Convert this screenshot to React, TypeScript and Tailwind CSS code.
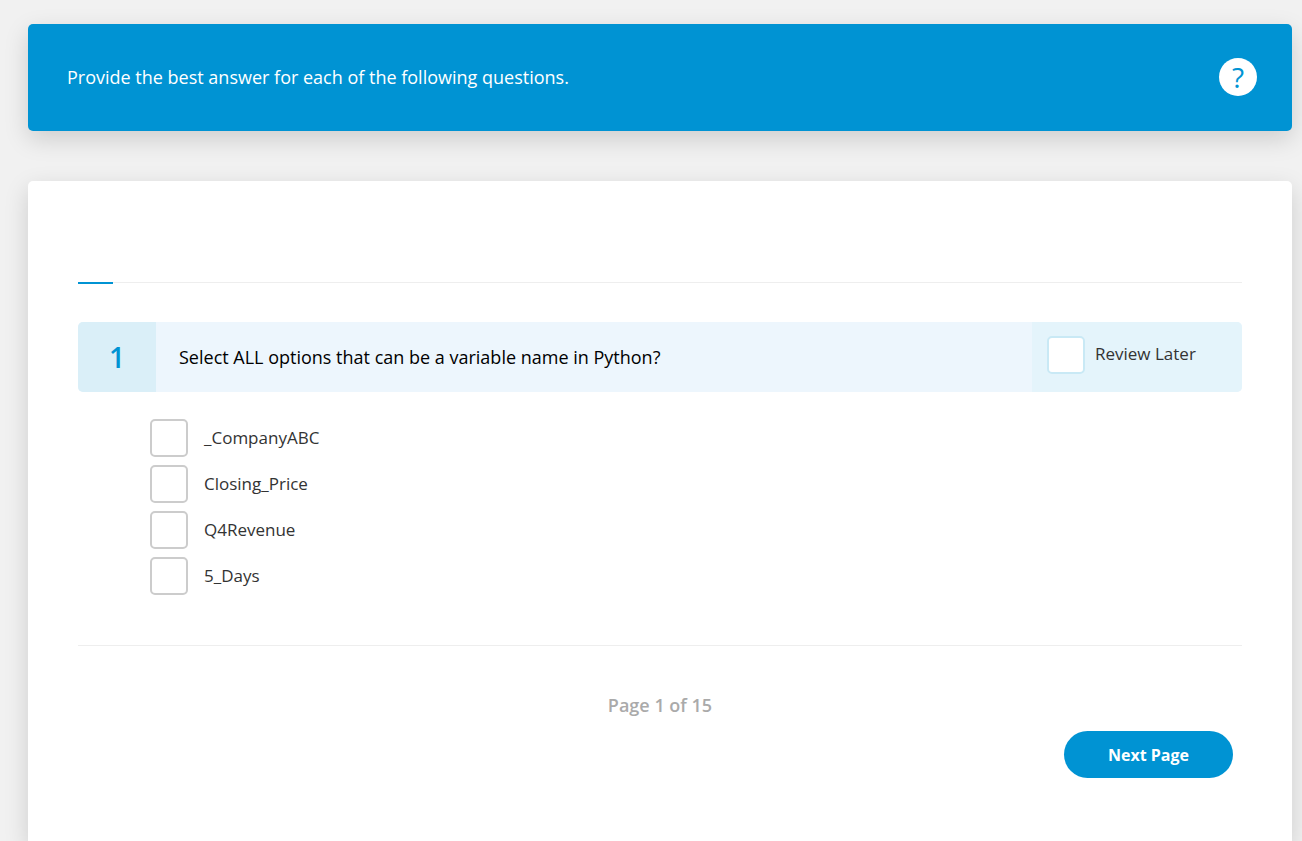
import React, { useState } from 'react';

const OPTIONS = ['_CompanyABC', 'Closing_Price', 'Q4Revenue', '5_Days'];

const App: React.FC = () => {
    const [selected, setSelected] = useState<string[]>([]);
    const [reviewLater, setReviewLater] = useState(false);

    const toggle = (option: string) => {
        setSelected(selected.includes(option) ? selected.filter((o) => o !== option) : [...selected, option]);
    };

    return (
        <div className="flex min-h-screen flex-col bg-[#f1f1f1] pt-6 pr-2.5 pl-7 font-['Open_Sans',sans-serif] text-[#333333]">
            <header className="flex items-center justify-between rounded-[5px] bg-[#0093d3] pt-[34px] pr-[35px] pb-[35px] pl-[39px] text-white shadow-[0_8px_25px_rgba(0,0,0,0.15)]">
                <p className="text-lg leading-6">Provide the best answer for each of the following questions.</p>
                <button type="button" aria-label="Help" className="flex size-[38px] items-center justify-center rounded-full bg-white text-[28px] leading-none text-[#0093d3]">
                    ?
                </button>
            </header>

            <main className="mt-[50px] grow rounded-t-[5px] bg-white px-[50px] pt-[101px] pb-16 shadow-[0_8px_25px_rgba(0,0,0,0.15)]">
                <div className="h-0.5">
                    <div className="border-t border-[#eeeeee]">
                        <div className="-mt-px h-0.5 w-[35px] bg-[#0093d3]" />
                    </div>
                </div>

                <section className="mt-[38px] flex h-[70px] overflow-hidden rounded-[5px] bg-[#edf6fd]">
                    <div className="flex w-[78px] items-center justify-center bg-[#daeff8] text-[28px] font-semibold text-[#0093d3]">1</div>
                    <h1 className="flex grow items-center pl-[23px] text-lg text-black">Select ALL options that can be a variable name in Python?</h1>
                    <label className="flex w-[210px] items-center gap-2.5 bg-[#e4f4fb] pl-[15px] text-[17px]">
                        <input
                            type="checkbox"
                            className="mb-1 size-[38px] appearance-none rounded-[5px] border-2 border-[#c9e9f5] bg-white checked:bg-[#0093d3]"
                            checked={reviewLater}
                            onChange={() => setReviewLater(!reviewLater)}
                        />
                        <span className="pb-1.5">Review Later</span>
                    </label>
                </section>

                <div className="mt-[27px] flex flex-col gap-2 pl-[72px]">
                    {OPTIONS.map((option) => (
                        <label key={option} className="flex items-center gap-4 self-start text-[17px]">
                            <input
                                type="checkbox"
                                className="size-[38px] appearance-none rounded-[5px] border-2 border-[#cccccc] bg-white checked:bg-[#0093d3]"
                                checked={selected.includes(option)}
                                onChange={() => toggle(option)}
                            />
                            {option}
                        </label>
                    ))}
                </div>

                <footer className="mt-[50px] border-t border-[#eeeeee] pt-[47px]">
                    <p className="text-center text-lg leading-6 font-semibold text-[#aaaaaa]">Page 1 of 15</p>
                    <div className="mt-3.5 flex justify-end pr-[9px]">
                        <button type="button" className="h-[47px] w-[169px] rounded-full bg-[#0093d3] text-base font-bold text-white">
                            Next Page
                        </button>
                    </div>
                </footer>
            </main>
        </div>
    );
};

export default App;
